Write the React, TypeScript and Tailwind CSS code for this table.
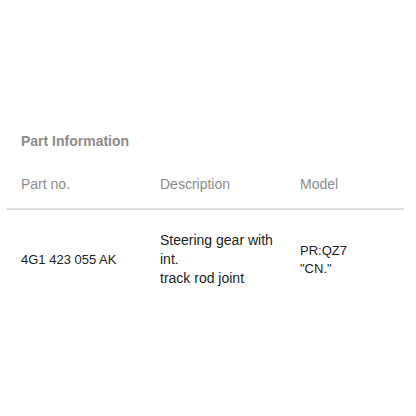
export default function App() {
    return (
        <div className="w-[416px] h-[416px] bg-white font-['Liberation_Sans',Arial,sans-serif]">
            <div className="pl-[7px] pr-[12px] pt-[131px]">
                {/* Section title */}
                <h2 className="pl-[14px] text-[14px] leading-[20px] font-bold text-[#8c8c8c]">Part Information</h2>

                {/* Table header */}
                <div className="mt-[23px] grid grid-cols-[139px_140px_1fr] border-b-2 border-[#dcdcdc] pb-[14px] text-[14px] leading-[20px] text-[#8c8c8c]">
                    <div className="pl-[14px]">Part no.</div>
                    <div className="pl-[14px]">Description</div>
                    <div className="pl-[14px]">Model</div>
                </div>

                {/* Row */}
                <div className="grid grid-cols-[139px_140px_1fr] items-center py-[21px] text-[13px] leading-[19px] text-[#222]">
                    <div className="pl-[14px]">4G1 423 055 AK</div>
                    <div className="pl-[14px] text-[14px]">
                        Steering gear with
                        <br />
                        int.
                        <br />
                        track rod joint
                    </div>
                    <div className="pl-[14px] leading-[18px]">
                        PR:QZ7
                        <br />
                        "CN."
                    </div>
                </div>
            </div>
        </div>
    );
}
